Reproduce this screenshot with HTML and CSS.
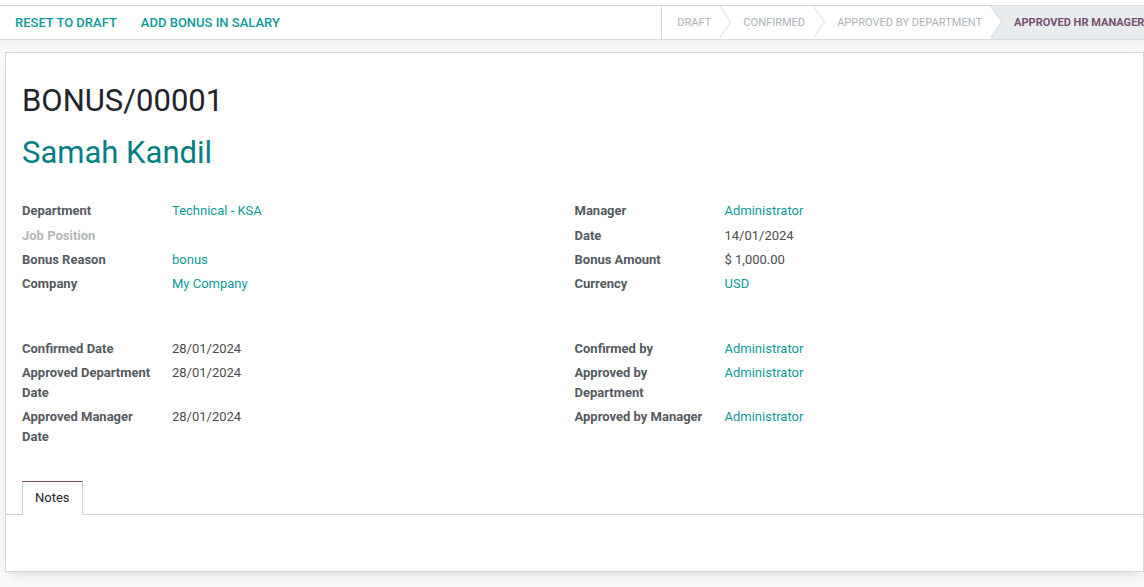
FILE: index.html
```html
<!DOCTYPE html>
<html>
<head>
<meta charset="utf-8">
<link rel="stylesheet" href="styles.css">
</head>
<body>
<div class="top-gap"></div>
<div class="statusbar">
  <div class="sb-buttons">
    <span class="sb-btn">Reset to Draft</span>
    <span class="sb-btn">Add Bonus in Salary</span>
  </div>
  <div class="sb-status">
    <span class="st first">Draft</span>
    <span class="st">Confirmed</span>
    <span class="st">Approved by Department</span>
    <span class="st active">Approved HR Manager</span>
  </div>
</div>
<div class="content">
  <div class="sheet">
    <h1 class="title">BONUS/00001</h1>
    <div class="employee">Samah Kandil</div>

    <div class="groups first-groups">
      <div class="group">
        <div class="lbl">Department</div><div class="val link">Technical - KSA</div>
        <div class="lbl muted">Job Position</div><div class="val"></div>
        <div class="lbl">Bonus Reason</div><div class="val link">bonus</div>
        <div class="lbl">Company</div><div class="val link">My Company</div>
      </div>
      <div class="group">
        <div class="lbl">Manager</div><div class="val link">Administrator</div>
        <div class="lbl">Date</div><div class="val">14/01/2024</div>
        <div class="lbl">Bonus Amount</div><div class="val">$ 1,000.00</div>
        <div class="lbl">Currency</div><div class="val link">USD</div>
      </div>
    </div>

    <div class="groups second-groups">
      <div class="group">
        <div class="lbl">Confirmed Date</div><div class="val">28/01/2024</div>
        <div class="lbl">Approved Department Date</div><div class="val">28/01/2024</div>
        <div class="lbl">Approved Manager Date</div><div class="val">28/01/2024</div>
      </div>
      <div class="group">
        <div class="lbl">Confirmed by</div><div class="val link">Administrator</div>
        <div class="lbl">Approved by Department</div><div class="val link">Administrator</div>
        <div class="lbl">Approved by Manager</div><div class="val link">Administrator</div>
      </div>
    </div>

    <div class="notebook">
      <div class="tabs">
        <span class="tab active">Notes</span>
      </div>
      <div class="tab-pane"></div>
    </div>
  </div>
</div>
</body>
</html>
```
FILE: styles.css
```css
html, body {
  margin: 0;
  padding: 0;
}
body {
  width: 1144px;
  height: 587px;
  overflow: hidden;
  background: #ffffff;
  font-family: Roboto, "Liberation Sans", sans-serif;
  font-size: 13px;
  color: #4c4c4c;
}
.top-gap {
  height: 5px;
  background: #fff;
}
.statusbar {
  display: flex;
  align-items: stretch;
  height: 33px;
  border-top: 1px solid #d8dadd;
  border-bottom: 1px solid #d8dadd;
  background: #fff;
  overflow: hidden;
}
.sb-buttons {
  display: flex;
  align-items: center;
  gap: 24px;
  padding-left: 15px;
  flex: 1;
}
.sb-btn {
  color: #0d9a9c;
  font-weight: 500;
  text-transform: uppercase;
  font-size: 13px;
  white-space: nowrap;
}
.sb-status {
  display: flex;
  flex: none;
  align-items: stretch;
  margin-left: auto;
}
.st {
  position: relative;
  display: flex;
  align-items: center;
  padding: 0 9px 0 23px;
  font-size: 11.05px;
  text-transform: uppercase;
  color: #adb3b9;
  white-space: nowrap;
  background: #fff;
}
.st.first {
  padding-left: 15px;
  border-left: 1px solid #d8dadd;
}
.st::before,
.st::after {
  content: "";
  position: absolute;
  top: 0;
  width: 0;
  height: 0;
  border-top: 16.5px solid transparent;
  border-bottom: 16.5px solid transparent;
  z-index: 2;
}
.st::before {
  right: -11px;
  border-left: 11px solid #d8dadd;
}
.st::after {
  right: -10px;
  border-left: 11px solid #fff;
  z-index: 3;
}
.st.active {
  background: #e9ecef;
  color: #7a4f6f;
  font-weight: 700;
  width: 121px;
  overflow: hidden;
  z-index: 0;
}
.st.active::before,
.st.active::after {
  display: none;
}
.content {
  background: linear-gradient(#f1f2f3, #f8f9fa 14px);
  padding-top: 12px;
  height: 547px;
  box-sizing: border-box;
  overflow: hidden;
}
.sheet {
  margin-left: 5px;
  width: 1139px;
  box-sizing: border-box;
  height: 520px;
  background: #fff;
  border: 1px solid #d5d7da;
  box-shadow: 0 6px 12px -6px rgba(0,0,0,0.18);
  padding: 30px 16px 0 16px;
}
.title {
  margin: 0;
  font-size: 31px;
  line-height: 36px;
  font-weight: 400;
  color: #212529;
}
.employee {
  margin-top: 16px;
  font-size: 31px;
  line-height: 36px;
  color: #017e84;
}
.groups {
  display: grid;
  grid-template-columns: 1fr 1fr;
  align-items: start;
}
.first-groups {
  margin-top: 28px;
}
.second-groups {
  margin-top: 40px;
}
.group {
  display: grid;
  grid-template-columns: 150px 1fr;
  align-content: start;
}
.lbl,
.val {
  line-height: 20px;
  padding: 2.2px 0;
}
.lbl {
  font-weight: 700;
  color: #555a5f;
  padding-right: 16px;
}
.lbl.muted {
  color: #b4b7ba;
}
.val {
  color: #4c4c4c;
}
.val.link {
  color: #0d9a9c;
}
.notebook {
  margin: 31px -16px 0 -16px;
}
.tabs {
  display: flex;
  padding-left: 16px;
  border-bottom: 1px solid #cdd2d7;
  height: 33px;
}
.tab {
  display: flex;
  align-items: center;
  padding: 0 12px;
  margin-bottom: -1px;
  color: #212529;
  font-size: 13px;
}
.tab.active {
  background: #fff;
  border: 1px solid #cdd2d7;
  border-top-color: #714b67;
  border-bottom-color: #fff;
}
```
